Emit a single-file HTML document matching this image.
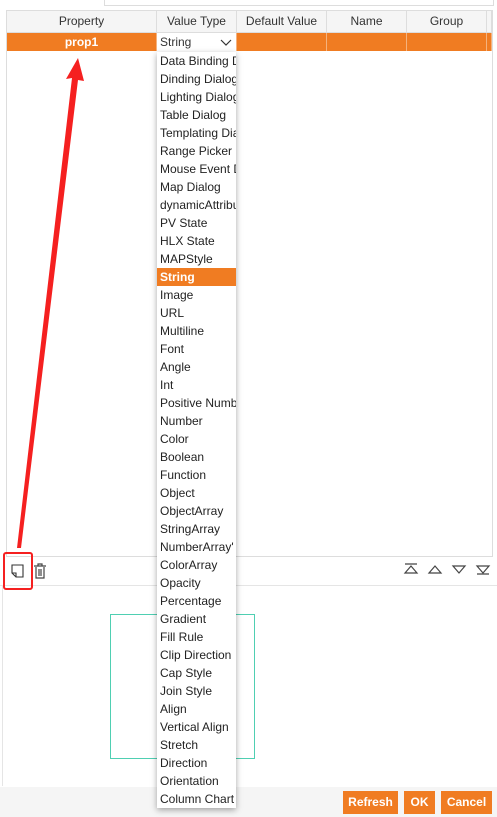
<!DOCTYPE html>
<html><head><meta charset="utf-8"><style>
body{margin:0;width:497px;height:817px;position:relative;background:#fff;font-family:"Liberation Sans",Arial,sans-serif;font-size:12px;color:#333;overflow:hidden}
.a{position:absolute}
.hd{top:11px;height:21px;line-height:21px;text-align:center;background:#f5f5f5;border-right:1px solid #ddd;border-bottom:1px solid #ddd}
.row{top:33px;height:18px;background:#f07c22;border-right:1px solid #f5b27d}
.dd{left:157px;top:52px;width:79px;height:756px;background:#fff;box-shadow:0 2px 6px rgba(0,0,0,.35);overflow:hidden}
.dd div{height:18px;line-height:18px;padding-left:3px;white-space:nowrap;font-size:12px;color:#222}
.dd .s{background:#f07c22;color:#fff;font-weight:bold}
.btn{top:791px;height:23px;line-height:23px;background:#f07c22;color:#fff;font-weight:bold;text-align:center;font-size:12px}
</style></head><body>
<div class="a" style="left:104px;top:0;width:388px;height:5px;border:1px solid #ddd;border-top:none"></div>
<div class="a" style="left:6px;top:10px;width:485px;height:545px;border:1px solid #ddd"></div>
<div class="a hd" style="left:7px;width:149px">Property</div>
<div class="a hd" style="left:157px;width:79px">Value Type</div>
<div class="a hd" style="left:237px;width:89px">Default Value</div>
<div class="a hd" style="left:327px;width:79px">Name</div>
<div class="a hd" style="left:407px;width:79px">Group</div>
<div class="a hd" style="left:487px;width:4px"></div>
<div class="a row" style="left:7px;width:149px;color:#fff;font-weight:bold;text-align:center;line-height:18px">prop1</div>
<div class="a row" style="left:157px;width:79px;background:#fff;line-height:18px"><span style="padding-left:3px">String</span>
<svg class="a" style="left:63px;top:6px" width="12" height="8"><path d="M1 1L6 6L11 1" fill="none" stroke="#333" stroke-width="1.2"/></svg></div>
<div class="a row" style="left:237px;width:89px"></div>
<div class="a row" style="left:327px;width:79px"></div>
<div class="a row" style="left:407px;width:79px"></div>
<div class="a row" style="left:487px;width:4px"></div>
<div class="a" style="left:0;top:585px;width:497px;height:1px;background:#e5e5e5"></div>
<div class="a" style="left:2px;top:586px;width:1px;height:200px;background:#e5e5e5"></div>
<svg class="a" style="left:8px;top:562px" width="40" height="18"><path d="M4 3H15V15H8L4 11Z M4 11H8V15" fill="none" stroke="#333" stroke-width="1.1"/><path d="M26 4H38 M30 4V2H34V4 M28 5V16H36V5 M31 7V14 M33 7V14" fill="none" stroke="#444" stroke-width="1.2"/></svg>
<div class="a" style="left:3px;top:552px;width:26px;height:34px;border:2px solid #f52020;border-radius:3px"></div>
<svg class="a" style="left:400px;top:562px" width="95" height="14"><g fill="none" stroke="#444" stroke-width="1.2"><path d="M5 2H17 M5 11L11 4L17 11Z"/><path d="M29 11L35 4L41 11Z"/><path d="M53 4L59 11L65 4Z"/><path d="M77 4L83 11L89 4Z M77 12H89"/></g></svg>
<div class="a" style="left:110px;top:614px;width:143px;height:143px;border:1px solid #4fcfb2"></div>
<div class="a" style="left:0;top:787px;width:497px;height:30px;background:#f5f5f5"></div>
<div class="a btn" style="left:343px;width:55px">Refresh</div>
<div class="a btn" style="left:404px;width:31px">OK</div>
<div class="a btn" style="left:441px;width:51px">Cancel</div>
<svg class="a" style="left:0;top:0" width="497" height="817"><path d="M17 548L72 78L66 79L78 58L84 81L78 80L21 548Z" fill="#f52020"/></svg>
<div class="a dd">
<div>Data Binding Dialog</div><div>Dinding Dialog</div><div>Lighting Dialog</div><div>Table Dialog</div><div>Templating Dialog</div><div>Range Picker</div><div>Mouse Event Dialog</div><div>Map Dialog</div><div>dynamicAttribute</div><div>PV State</div><div>HLX State</div><div>MAPStyle</div><div class="s">String</div><div>Image</div><div>URL</div><div>Multiline</div><div>Font</div><div>Angle</div><div>Int</div><div>Positive Number</div><div>Number</div><div>Color</div><div>Boolean</div><div>Function</div><div>Object</div><div>ObjectArray</div><div>StringArray</div><div>NumberArray'</div><div>ColorArray</div><div>Opacity</div><div>Percentage</div><div>Gradient</div><div>Fill Rule</div><div>Clip Direction</div><div>Cap Style</div><div>Join Style</div><div>Align</div><div>Vertical Align</div><div>Stretch</div><div>Direction</div><div>Orientation</div><div>Column Chart</div>
</div>
</body></html>
